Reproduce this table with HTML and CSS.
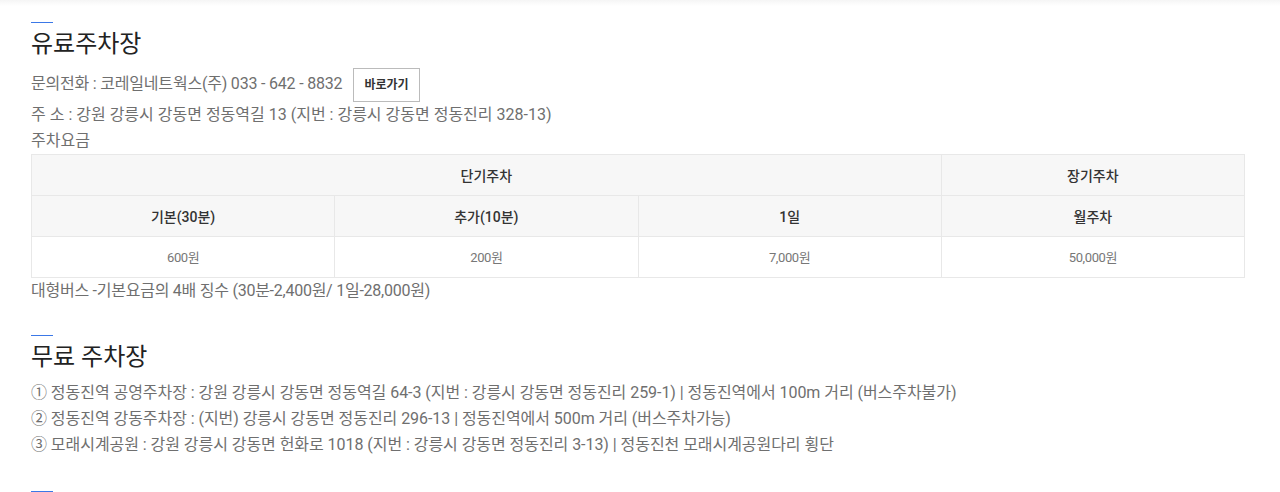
FILE: index.html
```html
<!DOCTYPE html>
<html lang="ko">
<head>
    <meta charset="UTF-8">
    <title>주차장 안내</title>
    <link rel="stylesheet" href="styles.css">
</head>
<body>
    <div class="top-shade"></div>
    <div class="wrap">
        <div class="section">
            <span class="bar"></span>
            <h2 class="tit">유료주차장</h2>
            <p class="txt tel">문의전화 : 코레일네트웍스(주) 033 - 642 - 8832 <a class="btn" href="#">바로가기</a></p>
            <p class="txt">주 소 : 강원 강릉시 강동면 정동역길 13 (지번 : 강릉시 강동면 정동진리 328-13)</p>
            <p class="txt">주차요금</p>
            <table class="fee">
                <tr>
                    <th colspan="3">단기주차</th>
                    <th>장기주차</th>
                </tr>
                <tr>
                    <th>기본(30분)</th>
                    <th>추가(10분)</th>
                    <th>1일</th>
                    <th>월주차</th>
                </tr>
                <tr>
                    <td>600원</td>
                    <td>200원</td>
                    <td>7,000원</td>
                    <td>50,000원</td>
                </tr>
            </table>
            <p class="txt note">대형버스 -기본요금의 4배 징수 (30분-2,400원/ 1일-28,000원)</p>
        </div>

        <div class="section">
            <span class="bar"></span>
            <h2 class="tit">무료 주차장</h2>
            <ul class="list">
                <li>① 정동진역 공영주차장 : 강원 강릉시 강동면 정동역길 64-3 (지번 : 강릉시 강동면 정동진리 259-1) | 정동진역에서 100m 거리 (버스주차불가)</li>
                <li>② 정동진역 강동주차장 : (지번) 강릉시 강동면 정동진리 296-13 | 정동진역에서 500m 거리 (버스주차가능)</li>
                <li>③ 모래시계공원 : 강원 강릉시 강동면 헌화로 1018 (지번 : 강릉시 강동면 정동진리 3-13) | 정동진천 모래시계공원다리 횡단</li>
            </ul>
        </div>

        <div class="section">
            <span class="bar"></span>
        </div>
    </div>
</body>
</html>
```

FILE: styles.css
```css
* {
    margin: 0;
    padding: 0;
    box-sizing: border-box;
}
body {
    font-family: Roboto, "Noto Sans CJK KR", sans-serif;
    color: #6f6f6f;
    background: #fff;
    overflow: hidden;
}
.top-shade {
    height: 6px;
    background: linear-gradient(#f5f5f5, #fff);
}
.wrap {
    padding: 0 35px 0 31px;
}
.section {
    padding-top: 16px;
    padding-bottom: 17px;
}
.section + .section {
    padding-top: 14px;
}
.bar {
    display: block;
    width: 22px;
    height: 1px;
    background: #3b78e7;
}
.tit {
    font-size: 24px;
    font-weight: 400;
    color: #222;
    line-height: 34px;
    margin: 4px 0 6px;
}
.txt {
    font-size: 16px;
    line-height: 26px;
    letter-spacing: 0;
}
.tel {
    line-height: 34px;
    letter-spacing: -0.2px;
}
.btn {
    display: inline-block;
    vertical-align: middle;
    margin-left: 7px;
    width: 67px;
    height: 34px;
    line-height: 32px;
    border: 1px solid #bbb;
    text-align: center;
    font-size: 12px;
    font-weight: 700;
    letter-spacing: 0;
    color: #333;
    text-decoration: none;
}
.fee {
    width: 100%;
    border-collapse: collapse;
    table-layout: fixed;
}
.fee th,
.fee td {
    border: 1px solid #e8e8e8;
    height: 41px;
    text-align: center;
}
.fee th {
    background: #f7f7f7;
    color: #333;
    font-size: 14px;
    font-weight: 500;
}
.fee td {
    color: #777;
    font-size: 13px;
    letter-spacing: -0.4px;
}
.note {
    letter-spacing: -0.25px;
}
.list {
    list-style: none;
    font-size: 16px;
    line-height: 26px;
    letter-spacing: -0.05px;
    margin-bottom: 2px;
}
```
